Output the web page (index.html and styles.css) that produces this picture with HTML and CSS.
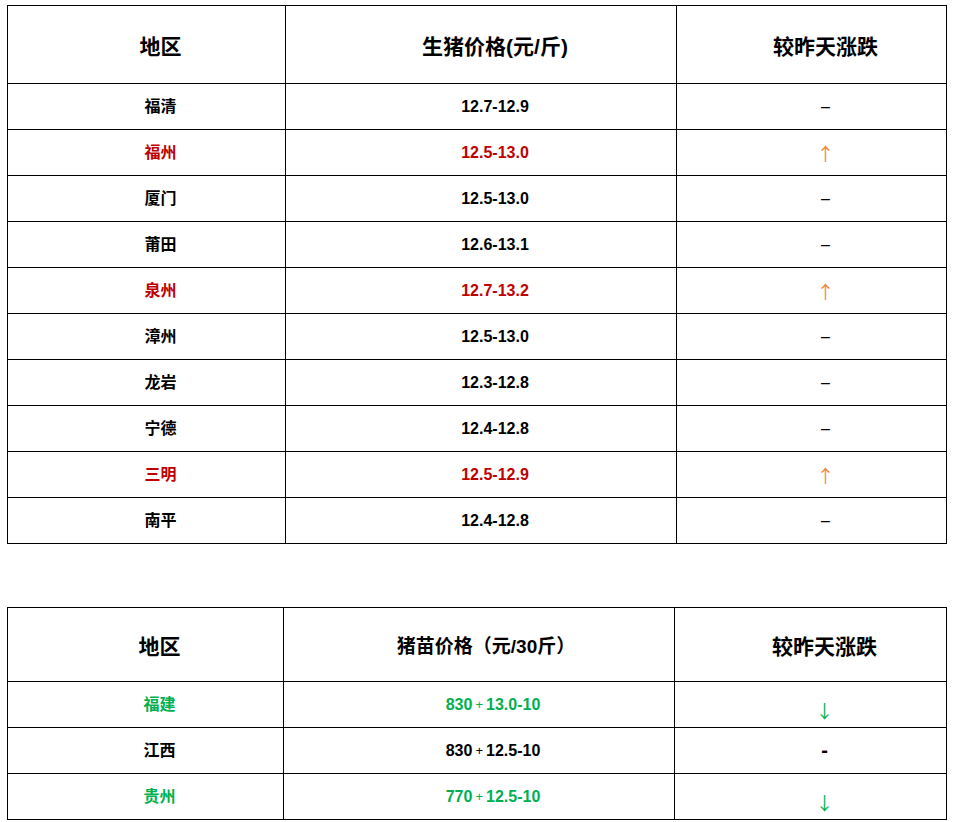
FILE: index.html
```html
<!DOCTYPE html>
<html lang="zh-CN">
<head>
<meta charset="utf-8">
<title>生猪价格</title>
<link rel="stylesheet" href="styles.css">
</head>
<body>
<div class="page">
  <table class="price t1">
    <colgroup><col class="c1"><col class="c2"><col class="c3"></colgroup>
    <thead>
      <tr class="head"><th>地区</th><th>生猪价格(元/斤)</th><th>较昨天涨跌</th></tr>
    </thead>
    <tbody>
      <tr><td><span class="cn">福清</span></td><td>12.7-12.9</td><td><span class="flat">–</span></td></tr>
      <tr class="up"><td><span class="cn">福州</span></td><td>12.5-13.0</td><td><span class="arrow-up">↑</span></td></tr>
      <tr><td><span class="cn">厦门</span></td><td>12.5-13.0</td><td><span class="flat">–</span></td></tr>
      <tr><td><span class="cn">莆田</span></td><td>12.6-13.1</td><td><span class="flat">–</span></td></tr>
      <tr class="up"><td><span class="cn">泉州</span></td><td>12.7-13.2</td><td><span class="arrow-up">↑</span></td></tr>
      <tr><td><span class="cn">漳州</span></td><td>12.5-13.0</td><td><span class="flat">–</span></td></tr>
      <tr><td><span class="cn">龙岩</span></td><td>12.3-12.8</td><td><span class="flat">–</span></td></tr>
      <tr><td><span class="cn">宁德</span></td><td>12.4-12.8</td><td><span class="flat">–</span></td></tr>
      <tr class="up"><td><span class="cn">三明</span></td><td>12.5-12.9</td><td><span class="arrow-up">↑</span></td></tr>
      <tr><td><span class="cn">南平</span></td><td>12.4-12.8</td><td><span class="flat">–</span></td></tr>
    </tbody>
  </table>

  <table class="price t2">
    <colgroup><col class="d1"><col class="d2"><col class="d3"></colgroup>
    <thead>
      <tr class="head"><th>地区</th><th class="narrow">猪苗价格（元/30斤）</th><th>较昨天涨跌</th></tr>
    </thead>
    <tbody>
      <tr class="down"><td><span class="cn">福建</span></td><td>830<span class="plus">+</span>13.0-10</td><td><span class="arrow-down">↓</span></td></tr>
      <tr><td><span class="cn">江西</span></td><td>830<span class="plus">+</span>12.5-10</td><td><span class="hy">-</span></td></tr>
      <tr class="down"><td><span class="cn">贵州</span></td><td>770<span class="plus">+</span>12.5-10</td><td><span class="arrow-down">↓</span></td></tr>
    </tbody>
  </table>
</div>
</body>
</html>
```

FILE: styles.css
```css
html, body {
  margin: 0;
  padding: 0;
  background: #ffffff;
}
body {
  font-family: "Liberation Sans", "Noto Sans CJK SC", sans-serif;
  color: #000000;
}
.page {
  padding: 5px 0 0 7px;
  display: flex;
  flex-direction: column;
  gap: 63px;
  align-items: flex-start;
}
.price {
  border-collapse: collapse;
  table-layout: fixed;
  width: 939px;
}
.price th, .price td {
  border: 1px solid #000;
  text-align: center;
  vertical-align: middle;
  padding: 0 0 0 28px;
  font-weight: bold;
  white-space: nowrap;
}
.price th {
  font-size: 21px;
  font-weight: bold;
}
.price td {
  font-size: 16px;
  height: 45px;
}
.t1 .head th { height: 77px; }
.t2 .head th { height: 73px; }
.t1 .c1 { width: 278px; }
.t1 .c2 { width: 391px; }
.t1 .c3 { width: 270px; }
.t2 .d1 { width: 276px; }
.t2 .d2 { width: 391px; }
.t2 .d3 { width: 272px; }
.t2 th.narrow { font-size: 19px; padding-left: 14px; }

.cn {
  display: inline-block;
  transform: translateY(-2px);
}

.up td { color: #c00000; }
.down td { color: #00b050; }

.flat {
  font-weight: normal;
  color: #000;
  font-size: 16px;
}
.arrow-up, .arrow-down {
  display: inline-block;
  font-family: "Noto Sans CJK SC", sans-serif;
  font-weight: normal;
  font-size: 18px;
  line-height: 1;
}
.arrow-up {
  color: #f08a3c;
  transform: translateY(2px);
}
.arrow-down {
  color: #00b050;
  transform: translateY(7px);
}
.hy {
  font-weight: bold;
  font-size: 20px;
  color: #000;
}
.plus {
  font-size: 13px;
  font-weight: normal;
  margin: 0 3px;
  vertical-align: 1px;
}
```
